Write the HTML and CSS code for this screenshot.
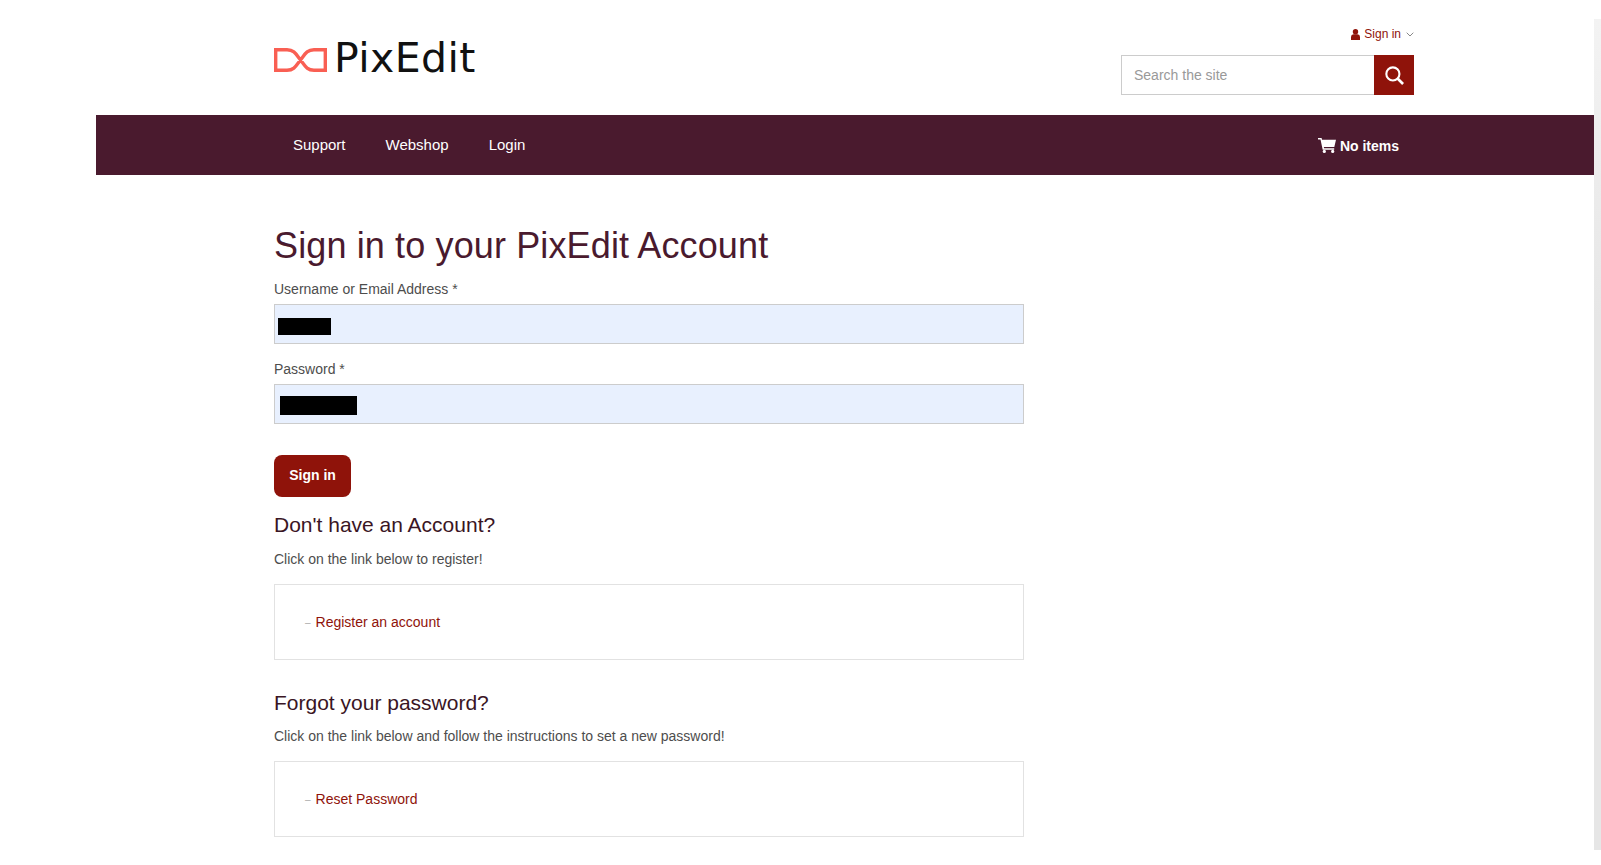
FILE: index.html
```html
<!DOCTYPE html>
<html lang="en">
<head>
<meta charset="utf-8">
<title>Sign in to your PixEdit Account</title>
<link rel="stylesheet" href="styles.css">
</head>
<body>
<div class="page">
  <header class="masthead">
    <a class="logo" href="#">
      <svg class="logo-mark" viewBox="0 0 53 24" aria-hidden="true"><path d="M1.700 1.700 H13 C20 1.700 22 6 26.500 12 C31 18 33 22.300 40 22.300 H51.300 V1.700 H40 C33 1.700 31 6 26.500 12 C22 18 20 22.300 13 22.300 H1.700 Z" fill="none" stroke="#f95f53" stroke-width="3.400"/></svg>
      <span class="logo-text">PixEdit</span>
    </a>
    <div class="tools">
      <a class="signin" href="#">
        <svg class="user-icon" viewBox="0 0 9 11" aria-hidden="true"><circle cx="4.500" cy="2.800" r="2.700"/><path d="M0 11 V8 Q0 5.500 2.500 5.200 H6.500 Q9 5.500 9 8 V11 Z"/></svg>
        Sign in
        <svg class="chev" viewBox="0 0 8 5" aria-hidden="true"><path d="M0.700 0.700 L4 4 L7.300 0.700" fill="none" stroke="#888" stroke-width="1"/></svg>
      </a>
      <form class="search">
        <input class="search-input" type="text" placeholder="Search the site">
        <button class="search-btn" type="button" aria-label="Search">
          <svg viewBox="0 0 20 20" aria-hidden="true"><circle cx="8.300" cy="8.300" r="6.900" fill="none" stroke="#fff" stroke-width="2.200"/><path d="M13.200 13.200 L19 19" stroke="#fff" stroke-width="2.800"/></svg>
        </button>
      </form>
    </div>
  </header>
  <nav class="navbar">
    <div class="nav-links">
      <a href="#">Support</a>
      <a href="#">Webshop</a>
      <a href="#">Login</a>
    </div>
    <a class="cart" href="#">
      <svg viewBox="0 0 18 15" aria-hidden="true"><path d="M0 0 H3.600 L4 1.800 H18 L16.300 9 H5.800 L6.100 10.300 H16.200 V11.800 H4.700 L2.500 1.500 H0 Z"/><circle cx="6.300" cy="13.400" r="1.600"/><circle cx="14.700" cy="13.400" r="1.600"/></svg>
      No items
    </a>
  </nav>
  <main class="content">
    <h1>Sign in to your PixEdit Account</h1>
    <form class="login">
      <label class="field">
        <span class="field-label">Username or Email Address *</span>
        <span class="field-box"><span class="redact redact-user"></span></span>
      </label>
      <label class="field">
        <span class="field-label">Password *</span>
        <span class="field-box"><span class="redact redact-pass"></span></span>
      </label>
      <button class="submit" type="button">Sign in</button>
    </form>
    <section class="block">
      <h2>Don't have an Account?</h2>
      <p>Click on the link below to register!</p>
      <ul class="linkbox"><li><a href="#">Register an account</a></li></ul>
    </section>
    <section class="block">
      <h2>Forgot your password?</h2>
      <p class="tight">Click on the link below and follow the instructions to set a new password!</p>
      <ul class="linkbox"><li><a href="#">Reset Password</a></li></ul>
    </section>
  </main>
</div>
<div class="scrolltrack"></div>
</body>
</html>
```
FILE: styles.css
```css
* { box-sizing: border-box; }
html, body { margin: 0; height: 100%; overflow: hidden; }
body { background: #fff; font-family: "Liberation Sans", Arial, sans-serif; font-size: 14px; color: #4d4d4d; }
a { text-decoration: none; color: inherit; }
.page { margin-left: 96px; width: 1498px; }
.masthead { height: 115px; padding: 0 180px 0 178px; display: flex; justify-content: space-between; align-items: flex-start; }
.logo { display: flex; align-items: center; padding-top: 36px; }
.logo-mark { width: 53px; height: 24px; margin-right: 7px; margin-top: 3px; }
.logo-text { font-family: "DejaVu Sans", sans-serif; font-size: 41px; line-height: 44px; font-weight: 400; color: #111; letter-spacing: 0.4px; }
.tools { display: flex; flex-direction: column; align-items: flex-end; padding-top: 26px; }
.signin { display: flex; align-items: center; height: 16px; font-size: 12px; color: #8f130a; margin-bottom: 13px; }
.user-icon { width: 9px; height: 11px; margin-right: 4px; fill: #8f130a; }
.chev { width: 8px; height: 5px; margin-left: 5px; }
.search { display: flex; height: 40px; width: 293px; margin: 0; }
.search-input { flex: 1; min-width: 0; border: 1px solid #ccc; border-right: 0; padding: 0 12px; font: 14px "Liberation Sans", Arial, sans-serif; color: #333; outline: 0; }
.search-input::placeholder { color: #999; opacity: 1; }
.search-btn { width: 40px; border: 0; padding: 0; background: #8f130a; display: flex; align-items: center; justify-content: center; }
.search-btn svg { width: 19px; height: 19px; }
.navbar { height: 60px; background: #4a1a2e; display: flex; align-items: center; justify-content: space-between; padding: 0 195px 0 178px; color: #fff; }
.nav-links { display: flex; gap: 40px; padding-left: 19px; padding-bottom: 2px; font-size: 15px; }
.cart { display: flex; align-items: center; font-weight: 700; font-size: 14px; margin-top: 1px; }
.cart svg { width: 18px; height: 15px; margin-right: 4px; fill: #fff; }
.content { padding: 0 178px; box-sizing: content-box; width: 750px; }
h1 { margin: 50px 0 0; font-size: 36px; font-weight: 400; line-height: 42px; color: #4a1a2e; letter-spacing: 0.13px; }
.field { display: block; margin-top: 13px; }
.field + .field { margin-top: 16px; }
.field-label { display: block; line-height: 18px; margin-bottom: 6px; }
.field-box { display: flex; align-items: center; height: 40px; background: #e8f0fe; border: 1px solid #ccc; }
.redact { display: block; background: #000; }
.redact-user { width: 53px; height: 17px; margin-left: 3px; margin-top: 5px; }
.redact-pass { width: 77px; height: 19px; margin-left: 5px; margin-top: 2px; }
.submit { display: block; margin-top: 31px; width: 77px; height: 42px; padding: 0 0 2px; background: #8f130a; color: #fff; border: 0; border-radius: 8px; font: 700 14px "Liberation Sans", Arial, sans-serif; }
h2 { margin: 15px 0 0; font-size: 21px; font-weight: 400; line-height: 26px; color: #3a1524; }
p { margin: 12px 0 0; line-height: 18px; }
p.tight { margin-top: 11px; }
.linkbox { list-style: none; margin: 16px 0 0; height: 76px; border: 1px solid #e2e2e2; padding: 0 0 0 30px; display: flex; align-items: center; }
.linkbox li::before { content: "–"; color: #aaa; font-size: 10px; margin-right: 5px; position: relative; top: -1px; }
.linkbox a { color: #8f130a; }
.block + .block { margin-top: 30px; }
.scrolltrack { position: fixed; right: 0; top: 19px; width: 7px; height: 831px; background: linear-gradient(#f3f3f3, #e6e6e6 36%); }
```
